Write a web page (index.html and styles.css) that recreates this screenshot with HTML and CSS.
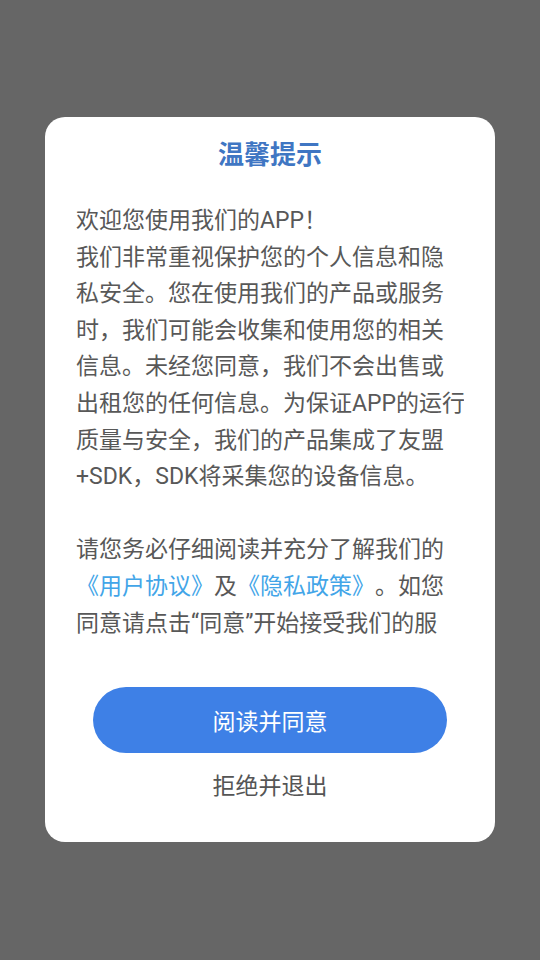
FILE: index.html
```html
<!DOCTYPE html>
<html lang="zh-CN">
<head>
<meta charset="utf-8">
<title>温馨提示</title>
<link rel="stylesheet" href="styles.css">
</head>
<body>
<div class="screen">
  <div class="dialog">
    <h1 class="title">温馨提示</h1>
    <div class="content">
      <p class="text">欢迎您使用我们的APP！<br>我们非常重视保护您的个人信息和隐<br>私安全。您在使用我们的产品或服务<br>时，我们可能会收集和使用您的相关<br>信息。未经您同意，我们不会出售或<br>出租您的任何信息。为保证APP的运行<br>质量与安全，我们的产品集成了友盟<br>+SDK，SDK将采集您的设备信息。<br><br>请您务必仔细阅读并充分了解我们的<br><span class="link">《用户协议》</span>及<span class="link">《隐私政策》</span>。如您<br>同意请点击“同意”开始接受我们的服<br>务。</p>
    </div>
    <div class="actions">
      <button class="btn-agree">阅读并同意</button>
      <div class="btn-decline">拒绝并退出</div>
    </div>
  </div>
</div>
</body>
</html>
```
FILE: styles.css
```css
html, body {
  margin: 0;
  padding: 0;
  background: #666666;
}
body {
  width: 540px;
  height: 960px;
  overflow: hidden;
  font-family: Roboto, "Noto Sans CJK SC", sans-serif;
}
.screen {
  width: 540px;
  height: 960px;
  padding-top: 117px;
  box-sizing: border-box;
}
.dialog {
  margin: 0 auto;
  width: 450px;
  height: 725px;
  background: #ffffff;
  border-radius: 20px;
  padding: 0 31px;
  box-sizing: border-box;
  display: flex;
  flex-direction: column;
}
.title {
  margin: 0;
  padding-top: 19px;
  font-size: 26px;
  line-height: 38px;
  font-weight: bold;
  color: #3f76c3;
  text-align: center;
}
.content {
  margin-top: 29px;
  height: 438px;
  overflow: hidden;
}
.text {
  margin: 0;
  font-size: 23px;
  line-height: 36.6px;
  color: #585858;
  white-space: nowrap;
  text-spacing-trim: space-all;
}
.link {
  color: #42a5e8;
}
.actions {
  margin-top: 46px;
  display: flex;
  flex-direction: column;
  align-items: center;
}
.btn-agree {
  width: 354px;
  height: 66px;
  border: none;
  border-radius: 33px;
  background: #3e80e6;
  color: #ffffff;
  font-family: Roboto, "Noto Sans CJK SC", sans-serif;
  font-size: 23px;
  padding: 0;
}
.btn-decline {
  margin-top: 16px;
  font-size: 23px;
  line-height: 36px;
  color: #555555;
}
```
